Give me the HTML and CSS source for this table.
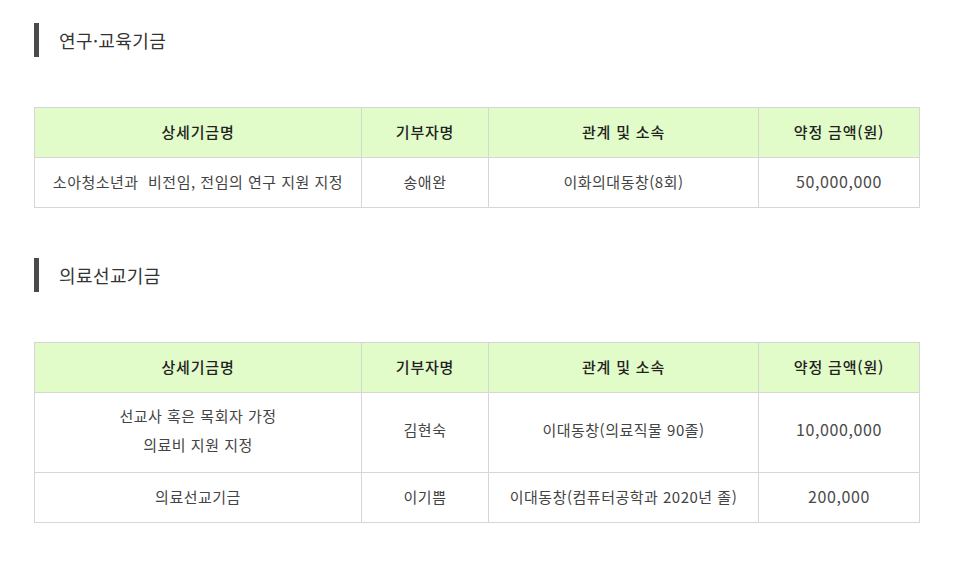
FILE: index.html
```html
<!DOCTYPE html>
<html lang="ko">
<head>
<meta charset="utf-8">
<link rel="stylesheet" href="styles.css">
</head>
<body>
<div class="page">
  <section class="fund">
    <h2 class="fund-title">연구·교육기금</h2>
    <table class="fund-table">
      <colgroup>
        <col class="c1"><col class="c2"><col class="c3"><col class="c4">
      </colgroup>
      <thead>
        <tr><th>상세기금명</th><th>기부자명</th><th>관계 및 소속</th><th>약정 금액(원)</th></tr>
      </thead>
      <tbody>
        <tr><td>소아청소년과&nbsp; 비전임, 전임의 연구 지원 지정</td><td>송애완</td><td>이화의대동창(8회)</td><td class="num">50,000,000</td></tr>
      </tbody>
    </table>
  </section>
  <section class="fund">
    <h2 class="fund-title">의료선교기금</h2>
    <table class="fund-table">
      <colgroup>
        <col class="c1"><col class="c2"><col class="c3"><col class="c4">
      </colgroup>
      <thead>
        <tr><th>상세기금명</th><th>기부자명</th><th>관계 및 소속</th><th>약정 금액(원)</th></tr>
      </thead>
      <tbody>
        <tr class="tall"><td>선교사 혹은 목회자 가정<br>의료비 지원 지정</td><td>김현숙</td><td>이대동창(의료직물 90졸)</td><td class="num">10,000,000</td></tr>
        <tr><td>의료선교기금</td><td>이기쁨</td><td>이대동창(컴퓨터공학과 2020년 졸)</td><td class="num">200,000</td></tr>
      </tbody>
    </table>
  </section>
</div>
</body>
</html>
```
FILE: styles.css
```css
html, body {
  margin: 0;
  padding: 0;
  background: #fff;
}
body {
  font-family: "Noto Sans CJK KR", "Noto Sans", sans-serif;
  color: #333;
}
.page {
  padding: 23px 0 0 34px;
  width: 886px;
}
.fund {
  margin-bottom: 50px;
}
.fund-title {
  margin: 0;
  height: 34px;
  display: flex;
  align-items: center;
  border-left: 5px solid #4a4a4a;
  padding-left: 20px;
  font-size: 18px;
  font-weight: 400;
  color: #333;
  letter-spacing: 0.4px;
  line-height: 1;
  padding-bottom: 1px;
  box-sizing: border-box;
}
.fund-table {
  margin-top: 50px;
  width: 885px;
  border-collapse: collapse;
  table-layout: fixed;
  border: 1px solid #d6d6d6;
}
.c1 { width: 327px; }
.c2 { width: 127px; }
.c3 { width: 270px; }
.c4 { width: 161px; }
.fund-table th,
.fund-table td {
  border: 1px solid #d6d6d6;
  text-align: center;
  vertical-align: middle;
  font-size: 15px;
  padding: 0 4px 3px;
  height: 46px;
  letter-spacing: 0.5px;
}
.fund-table th {
  background: #e1fbc9;
  font-weight: 500;
  color: #222;
  letter-spacing: 0.8px;
}
.fund-table td {
  color: #444;
  font-weight: 400;
  line-height: 29px;
}
.fund-table td.num {
  font-size: 16px;
  letter-spacing: 0.6px;
  color: #4a4a4a;
}
.fund-table tr.tall td {
  height: 73px;
  padding-bottom: 6px;
}
```
